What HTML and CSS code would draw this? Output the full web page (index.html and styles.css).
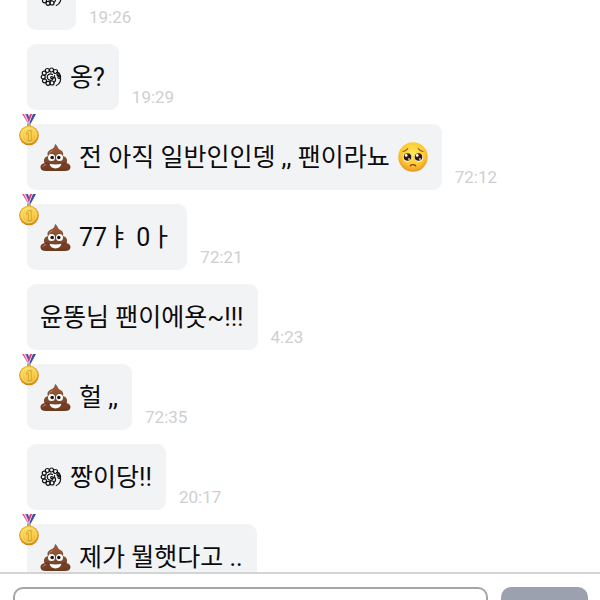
FILE: index.html
```
<!DOCTYPE html>
<html lang="ko">
<head>
    <meta charset="UTF-8">
    <meta name="viewport" content="width=device-width, initial-scale=1.0">
    <title>채팅</title>
    <link rel="stylesheet" href="styles.css">
</head>
<body>
    <!-- Shared icons -->
    <svg class="icon-defs" aria-hidden="true">
        <defs>
            <radialGradient id="gold" cx="45%" cy="35%" r="65%">
                <stop offset="0" stop-color="#ffe577"/>
                <stop offset="0.7" stop-color="#f4c238"/>
                <stop offset="1" stop-color="#cf8b14"/>
            </radialGradient>
            <linearGradient id="brown" x1="0" y1="0" x2="0" y2="1">
                <stop offset="0" stop-color="#99603f"/>
                <stop offset="1" stop-color="#6c3a20"/>
            </linearGradient>
            <radialGradient id="face" cx="50%" cy="38%" r="62%">
                <stop offset="0" stop-color="#ffe95c"/>
                <stop offset="0.65" stop-color="#fcc92f"/>
                <stop offset="1" stop-color="#e8962a"/>
            </radialGradient>

            <symbol id="medal" viewBox="0 0 20 32">
                <path d="M3 0h4l5 9-2 2z" fill="#e2609a"/>
                <path d="M5 0h1l5 10h-1z" fill="#f6e3ee"/>
                <path d="M7 0h2l2 6-1 2z" fill="#4b4da8"/>
                <path d="M17 0h-4L9 9l2 2z" fill="#3c4ca6"/>
                <path d="M14 0h-1L9 9l1 1z" fill="#e7e9f6"/>
                <path d="M13 0h-2l-2 6 1 2z" fill="#d6456e"/>
                <rect x="8" y="9" width="4" height="4" rx="1" fill="#b5a99a"/>
                <circle cx="10" cy="21.500" r="9.800" fill="#c98a18"/>
                <circle cx="10" cy="21.300" r="9.200" fill="url(#gold)"/>
                <circle cx="10" cy="21.300" r="7.400" fill="none" stroke="#ffe78a" stroke-width="0.800"/>
                <path d="M7.200 18.500l2.600-2h2.400v10H9.400v-7l-2.200.8z" fill="#f9d14a" stroke="#c8901f" stroke-width="0.700" stroke-linejoin="round"/>
            </symbol>

            <symbol id="poop" viewBox="0 0 31 29">
                <path d="M15 1c-.6 3-1 4.200-4 5.500-3.200 1.400-4.300 4-3 6.500-3.500.8-5 4.300-3.400 7C1.500 20.500.2 22.500.5 24.500.8 27.200 2.800 28 6 28h19c3.200 0 5.200-1 5.500-3.500.2-2-1-4-3.900-4.500 1.400-2.700 0-6.200-3.600-7C24 9.500 22 7.500 19.500 6.500 17.500 5.500 17.800 2 15 1z" fill="url(#brown)"/>
                <path d="M9 12.800c4 1.300 9 1 13-.8M5.500 20c1 .8 2.500 1 4 1M25.500 20c-1 .8-2.500 1-4 1" fill="none" stroke="#5a2d17" stroke-width="0.900" stroke-linecap="round"/>
                <path d="M12 8c-2 .8-2.800 2-2.500 3.200M3 23.500c.5-1 1.500-1.600 3-1.800" fill="none" stroke="#b98563" stroke-width="1" stroke-linecap="round"/>
                <ellipse cx="11.500" cy="14.500" rx="3.500" ry="3.600" fill="#fff"/>
                <ellipse cx="19.500" cy="14.500" rx="3.500" ry="3.600" fill="#fff"/>
                <circle cx="12.200" cy="14.500" r="1.800" fill="#1e1614"/>
                <circle cx="18.800" cy="14.500" r="1.800" fill="#1e1614"/>
                <path d="M9.500 20.800c3.800 1 8.200 1 12 0-.6 3-3 4.600-6 4.600s-5.400-1.600-6-4.600z" fill="#fff"/>
            </symbol>

            <symbol id="pleading" viewBox="0 0 30 30">
                <circle cx="15" cy="15" r="14.700" fill="url(#face)"/>
                <path d="M5 9.500c2-.3 3.700-1.200 4.800-3M25 9.500c-2-.3-3.700-1.200-4.800-3" fill="none" stroke="#94501c" stroke-width="1.100" stroke-linecap="round"/>
                <circle cx="9.200" cy="15.500" r="4.300" fill="#fff"/>
                <circle cx="20.800" cy="15.500" r="4.300" fill="#fff"/>
                <circle cx="9.500" cy="15" r="3.800" fill="#35190d"/>
                <circle cx="20.500" cy="15" r="3.800" fill="#35190d"/>
                <circle cx="8.200" cy="13.400" r="1.400" fill="#fff"/>
                <circle cx="19.200" cy="13.400" r="1.400" fill="#fff"/>
                <circle cx="11" cy="17" r="0.900" fill="#e8d8d0"/>
                <circle cx="22" cy="17" r="0.900" fill="#e8d8d0"/>
                <path d="M12.300 23.800c1.400-1.500 4-1.500 5.400 0" fill="none" stroke="#8a3f14" stroke-width="1.300" stroke-linecap="round"/>
            </symbol>

            <!-- Ring of small curls round a centre swirl, with a tail -->
            <symbol id="scribble" viewBox="0 0 22 20">
                <g fill="none" stroke="#111" stroke-width="1.200" stroke-linecap="round">
                    <circle cx="15.500" cy="4.500" r="2"/>
                    <circle cx="11.500" cy="3" r="2"/>
                    <circle cx="7.300" cy="3.500" r="2"/>
                    <circle cx="4.200" cy="6.200" r="2"/>
                    <circle cx="3.200" cy="10" r="2"/>
                    <circle cx="4.500" cy="13.800" r="2"/>
                    <circle cx="8" cy="16.300" r="2"/>
                    <circle cx="12" cy="16" r="2"/>
                    <path d="M16.500 5.500c2.200-.6 3.500.8 3 2.300-.6 1.400-2.800 1-2.500-.4.400-1.200 3.400-.2 3.600 2 .2 1.600-1.600 2.600-2.500 1.500-.8-1.200 1-2.300 2-.8 1.400 2.800-.1 7-3.800 8.400"/>
                    <path d="M12.500 7.500C9.500 6 7 8 7.200 10.300c.2 2.500 3 3.600 4.800 2.600 1.700-1 1.300-3.300-.3-3.300-1.400 0-1.400 1.900 0 2 1.800 0 3-1.200 2.800-3M15 10.500c1 2 .6 3.500-.6 4.700"/>
                </g>
            </symbol>
        </defs>
    </svg>

    <main class="chat">
        <div class="message">
            <div class="bubble"><svg class="scribble"><use href="#scribble"/></svg></div>
            <time class="time">19:26</time>
        </div>
        <div class="message">
            <div class="bubble"><svg class="scribble"><use href="#scribble"/></svg><span>옹?</span></div>
            <time class="time">19:29</time>
        </div>
        <div class="message">
            <div class="bubble">
                <svg class="medal"><use href="#medal"/></svg>
                <svg class="poop"><use href="#poop"/></svg><span>전 아직 일반인인뎅 ,, 팬이라뇨</span><svg class="pleading"><use href="#pleading"/></svg>
            </div>
            <time class="time">72:12</time>
        </div>
        <div class="message">
            <div class="bubble">
                <svg class="medal"><use href="#medal"/></svg>
                <svg class="poop"><use href="#poop"/></svg><span>77ㅑ 0ㅏ</span>
            </div>
            <time class="time">72:21</time>
        </div>
        <div class="message">
            <div class="bubble"><span>윤똥님 팬이에욧~!!!</span></div>
            <time class="time">4:23</time>
        </div>
        <div class="message">
            <div class="bubble">
                <svg class="medal"><use href="#medal"/></svg>
                <svg class="poop"><use href="#poop"/></svg><span>헐 ,,</span>
            </div>
            <time class="time">72:35</time>
        </div>
        <div class="message">
            <div class="bubble"><svg class="scribble"><use href="#scribble"/></svg><span>짱이당!!</span></div>
            <time class="time">20:17</time>
        </div>
        <div class="message">
            <div class="bubble">
                <svg class="medal"><use href="#medal"/></svg>
                <svg class="poop"><use href="#poop"/></svg><span>제가 뭘햇다고 ..</span>
            </div>
        </div>
    </main>

    <!-- Message input -->
    <form class="composer">
        <input type="text" class="composer-input" aria-label="메시지">
        <button type="submit" class="composer-send" aria-label="보내기"></button>
    </form>
</body>
</html>
```

FILE: styles.css
```
* {
    box-sizing: border-box;
}

body {
    margin: 0;
    height: 100vh;
    overflow: hidden;
    display: flex;
    flex-direction: column;
    background-color: #fff;
    color: #0b0b0c;
    font-family: Roboto, "Noto Sans CJK KR", sans-serif;
}

.icon-defs {
    position: absolute;
    width: 0;
    height: 0;
}

/* Message list, kept at its newest entries */
.chat {
    flex: 0 0 calc(100vh - 28px);
    display: flex;
    flex-direction: column;
    justify-content: flex-end;
    gap: 14px;
    padding: 0 27px;
    overflow: hidden;
}

.message {
    display: flex;
    align-items: flex-end;
    gap: 13px;
    flex-shrink: 0;
}

.message:last-child {
    margin-bottom: -18px;
}

.bubble {
    position: relative;
    display: flex;
    align-items: center;
    gap: 8px;
    height: 66px;
    padding: 0 14px 0 13px;
    border-radius: 9px;
    background-color: #f2f3f5;
    font-size: 25px;
    line-height: 36px;
    white-space: nowrap;
}

.bubble span {
    padding-top: 2px;
}

.time {
    padding-bottom: 1px;
    color: #cfcfcf;
    font-size: 17px;
    line-height: 24px;
}

/* Icons */
.medal {
    position: absolute;
    top: -10px;
    left: -8px;
    width: 20px;
    height: 32px;
}

.poop {
    width: 31px;
    height: 29px;
}

.pleading {
    width: 30px;
    height: 30px;
}

.scribble {
    width: 22px;
    height: 20px;
}

/* Composer */
.composer {
    flex: none;
    display: flex;
    gap: 13px;
    padding: 13px 12px 13px 13px;
    border-top: 2px solid #d3d4d6;
    background-color: #fff;
}

.composer-input {
    flex: 1;
    min-width: 0;
    height: 56px;
    padding: 0 14px;
    border: 2px solid #a3a5a9;
    border-radius: 10px;
    background-color: #fff;
    font: inherit;
    font-size: 25px;
}

.composer-send {
    width: 87px;
    height: 56px;
    border: none;
    border-radius: 10px;
    background-color: #9ca1af;
}
```
